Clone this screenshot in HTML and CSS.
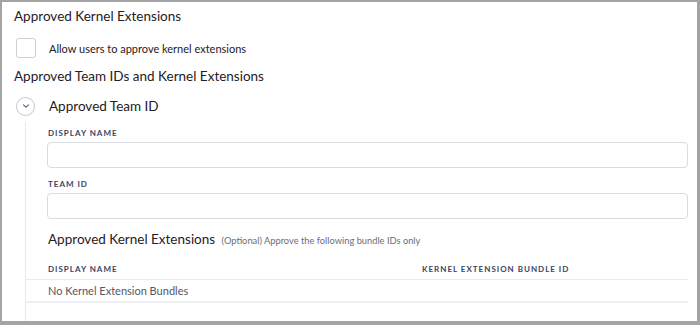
FILE: index.html
```html
<!DOCTYPE html>
<html lang="en">
<head>
    <meta charset="UTF-8">
    <meta name="viewport" content="width=device-width, initial-scale=1.0">
    <title>Approved Kernel Extensions</title>
    <link rel="stylesheet" href="styles.css">
</head>
<body>
    <div class="frame">
        <h2 class="section-title first">Approved Kernel Extensions</h2>
        <label class="check-row">
            <span class="checkbox"></span>
            <span class="check-label">Allow users to approve kernel extensions</span>
        </label>
        <h2 class="section-title">Approved Team IDs and Kernel Extensions</h2>

        <div class="accordion">
            <div class="accordion-head">
                <span class="toggle">
                    <svg width="8" height="6" viewBox="0 0 8 6">
                        <path d="M1.5 1.8 L4 4.2 L6.5 1.8" fill="none" stroke="#56607a" stroke-width="1.1" stroke-linecap="round" stroke-linejoin="round"/>
                    </svg>
                </span>
                <span class="accordion-title">Approved Team ID</span>
            </div>
            <div class="accordion-body">
                <div class="field">
                    <div class="field-label">DISPLAY NAME</div>
                    <div class="input"></div>
                </div>
                <div class="field">
                    <div class="field-label">TEAM ID</div>
                    <div class="input"></div>
                </div>
                <div class="sub-title">
                    Approved Kernel Extensions
                    <span class="hint">(Optional) Approve the following bundle IDs only</span>
                </div>
                <div class="table">
                    <div class="table-head">
                        <div class="col-name">DISPLAY NAME</div>
                        <div class="col-id">KERNEL EXTENSION BUNDLE ID</div>
                    </div>
                    <div class="table-empty">No Kernel Extension Bundles</div>
                </div>
            </div>
        </div>
    </div>
</body>
</html>
```

FILE: styles.css
```css
body {
    margin: 0;
    padding: 0;
    font-family: Lato, 'Open Sans', sans-serif;
    color: #1f2024;
}
.frame {
    width: 700px;
    height: 325px;
    box-sizing: border-box;
    border: 2px solid #a4a4a4;
    border-right-width: 3px;
    border-bottom-width: 4px;
    background: #fff;
    overflow: hidden;
    padding: 0 9px 0 12px;
}
.section-title {
    margin: 8px 0 0;
    font-size: 13.5px;
    font-weight: 400;
    line-height: 20px;
    height: 20px;
}
.section-title.first {
    margin-top: 4px;
}
.check-row {
    display: flex;
    align-items: center;
    margin: 12px 0 0 2px;
}
.checkbox {
    width: 18px;
    height: 18px;
    border: 1px solid #cdd0d7;
    border-radius: 3px;
}
.check-label {
    margin-left: 13px;
    font-size: 11px;
}
.accordion {
    margin-top: 10px;
}
.accordion-head {
    display: flex;
    align-items: center;
    height: 20px;
}
.toggle {
    width: 17px;
    height: 17px;
    margin-left: 2px;
    border: 1px solid #c3c7cf;
    border-radius: 50%;
    display: flex;
    align-items: center;
    justify-content: center;
}
.accordion-title {
    margin-left: 14px;
    font-size: 13.5px;
}
.accordion-body {
    margin: 6px 0 0 11px;
    border-left: 1px solid #e6e8ee;
    padding-top: 5px;
    height: 200px;
}
.field {
    margin-left: 21px;
    margin-bottom: 10px;
}
.field-label,
.table-head {
    font-size: 8px;
    font-weight: 700;
    letter-spacing: 1px;
    color: #3a4563;
    line-height: 12px;
}
.field-label {
    padding-left: 1px;
}
.input {
    margin-top: 3px;
    height: 24px;
    border: 1px solid #d9dbe2;
    border-radius: 4px;
}
.sub-title {
    margin-left: 22px;
    font-size: 13.5px;
    line-height: 20px;
}
.hint {
    margin-left: 3px;
    font-size: 9.3px;
    color: #6b6e75;
}
.table {
    margin-top: 12px;
}
.table-head {
    display: grid;
    grid-template-columns: 396px 1fr;
    height: 16px;
    border-bottom: 1px solid #e9ebf0;
}
.col-name {
    padding-left: 22px;
}
.table-empty {
    padding-left: 22px;
    height: 21px;
    line-height: 21px;
    font-size: 11px;
    color: #55585f;
    border-bottom: 2px solid #eef0f5;
}
```
